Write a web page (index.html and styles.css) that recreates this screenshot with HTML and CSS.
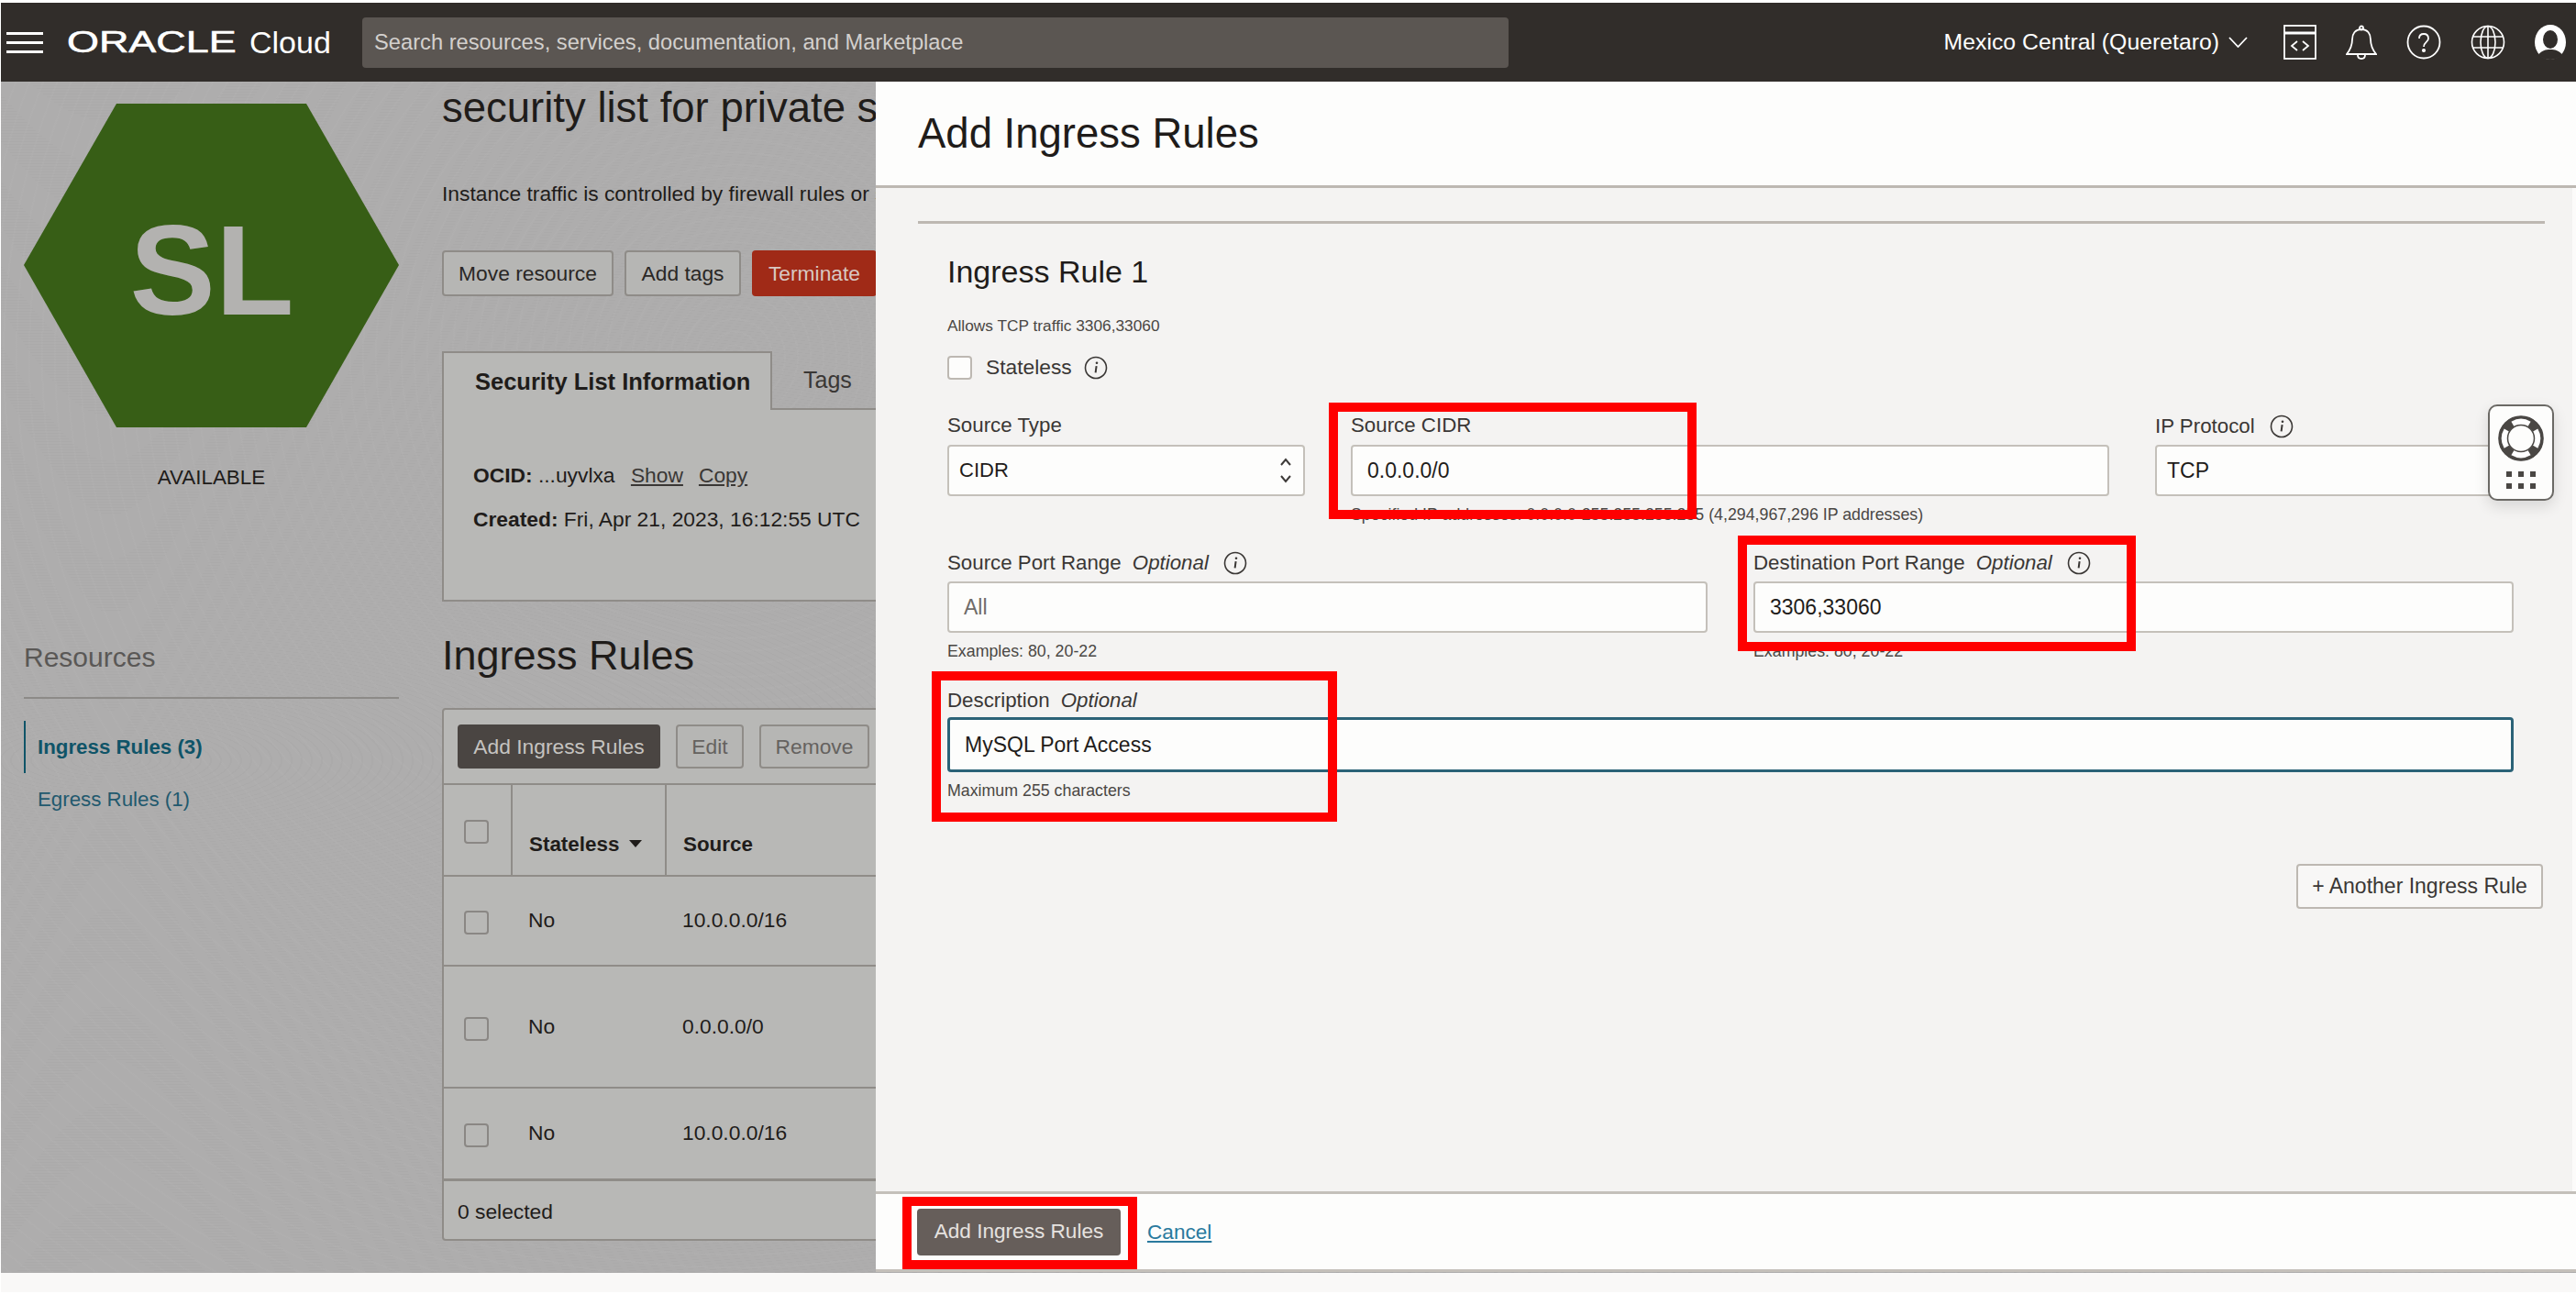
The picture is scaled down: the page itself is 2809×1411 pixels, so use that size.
FILE: index.html
```html
<!DOCTYPE html>
<html lang="en">
<head>
<meta charset="utf-8"/>
<title>Add Ingress Rules – Oracle Cloud</title>
<link rel="stylesheet" href="styles.css">
</head>
<body>
<svg class="defs" width="0" height="0">
  <symbol id="info" viewBox="0 0 26 26">
    <circle cx="13" cy="13" r="11.5" fill="none" stroke="currentColor" stroke-width="1.6"/>
    <path d="M13.6 11.2 12.6 18.4" fill="none" stroke="currentColor" stroke-width="2"/>
    <circle cx="14" cy="7.8" r="1.3" fill="currentColor"/>
  </symbol>
</svg>

<div class="app">
  <header class="topbar">
    <div class="burger"><span></span><span></span><span></span></div>
    <div class="logo"><span class="logo-word">ORACLE</span><span class="logo-cloud">Cloud</span></div>
    <div class="search">Search resources, services, documentation, and Marketplace</div>
    <div class="region">Mexico Central (Queretaro)
      <svg width="21" height="12" viewBox="0 0 21 12"><path d="M1 1l9.500 10L20 1" fill="none" stroke="#fff" stroke-width="1.800"/></svg>
    </div>
    <div class="top-icons">
      <svg width="36" height="38" viewBox="0 0 36 38" fill="none" stroke="#fff" stroke-width="1.800"><rect x="1" y="1" width="34" height="36"/><path d="M1 9h34" stroke-width="3"/><path d="M15 18l-6 5 6 5M21 18l6 5-6 5"/></svg>
      <svg width="34" height="38" viewBox="0 0 34 38" fill="none" stroke="#fff" stroke-width="1.800"><path d="M17 5c-7 0-10 5-10 11 0 7-2 11-6 16h32c-4-5-6-9-6-16 0-6-3-11-10-11z"/><circle cx="17" cy="3.500" r="2"/><path d="M13 33c0 3 2 4 4 4s4-1 4-4"/></svg>
      <svg width="38" height="38" viewBox="0 0 38 38" fill="none" stroke="#fff" stroke-width="1.800"><circle cx="19" cy="19" r="17.500"/><path d="M14 15c0-3 2-5 5-5s5 2 5 5c0 4-5 4-5 9" /><circle cx="19" cy="28" r="1.200" fill="#fff"/></svg>
      <svg width="38" height="38" viewBox="0 0 38 38" fill="none" stroke="#fff" stroke-width="1.600"><circle cx="19" cy="19" r="17.500"/><ellipse cx="19" cy="19" rx="8" ry="17.500"/><path d="M19 1.500v35M2 13h34M2 25h34"/></svg>
      <svg width="34" height="38" viewBox="0 0 34 38"><ellipse cx="17" cy="19" rx="17" ry="19" fill="#fff"/><ellipse cx="17" cy="16" rx="8" ry="10" fill="#312d2a"/><path d="M4 33c3-5 8-6 13-6s10 1 13 6c-3 3-8 5-13 5s-10-2-13-5z" fill="#312d2a"/></svg>
    </div>
  </header>

  <div class="workspace">
    <aside class="side">
      <svg class="hex" width="409" height="353" viewBox="0 0 409 353">
        <polygon points="0,176 101,0 308,0 409,176 308,353 101,353" fill="#375e16"/>
        <text x="205" y="230" text-anchor="middle" class="hex-text">SL</text>
      </svg>
      <div class="status">AVAILABLE</div>
      <h3 class="side-title">Resources</h3>
      <ul class="side-nav">
        <li class="active">Ingress Rules (3)</li>
        <li>Egress Rules (1)</li>
      </ul>
    </aside>

    <main class="detail">
      <h1 class="clipped">security list for private subnet-vcn-mysql</h1>
      <p class="intro clipped">Instance traffic is controlled by firewall rules or security lists on the instance.</p>
      <div class="actions">
        <button class="btn wide-1">Move resource</button>
        <button class="btn wide-2">Add tags</button>
        <button class="btn danger">Terminate</button>
      </div>
      <div class="tabs">
        <div class="tab active">Security List Information</div>
        <div class="tab">Tags</div>
      </div>
      <div class="tab-body">
        <p><strong>OCID:</strong> ...uyvlxa <a class="link-1">Show</a><a class="link-2">Copy</a></p>
        <p><strong>Created:</strong> Fri, Apr 21, 2023, 16:12:55 UTC</p>
      </div>
      <h2>Ingress Rules</h2>
      <div class="table-box">
        <div class="toolbar">
          <button class="btn dark">Add Ingress Rules</button>
          <button class="btn off wide-3">Edit</button>
          <button class="btn off wide-4">Remove</button>
        </div>
        <table>
          <thead>
            <tr><th class="c1"><span class="cb head-cb"></span></th><th class="c2">Stateless <i class="sort"></i></th><th>Source</th></tr>
          </thead>
          <tbody>
            <tr class="r1"><td class="c1"><span class="cb"></span></td><td class="c2">No</td><td>10.0.0.0/16</td></tr>
            <tr class="r2"><td class="c1"><span class="cb"></span></td><td class="c2">No</td><td>0.0.0.0/0</td></tr>
            <tr class="r3"><td class="c1"><span class="cb"></span></td><td class="c2">No</td><td>10.0.0.0/16</td></tr>
          </tbody>
        </table>
        <div class="table-foot">0 selected</div>
      </div>
    </main>

    <!-- drawer on top of the page -->
    <section class="drawer">
      <div class="drawer-head"><h2>Add Ingress Rules</h2></div>
      <div class="drawer-body">
        <div class="rule-line"></div>
        <div class="form">
          <h3>Ingress Rule 1</h3>
          <p class="allows">Allows TCP traffic 3306,33060</p>
          <div class="stateless"><span class="cb white"></span><span>Stateless</span><svg class="info"><use href="#info"/></svg></div>

          <div class="row row-3">
            <div class="field">
              <label>Source Type</label>
              <div class="input select">CIDR
                <svg width="14" height="30" viewBox="0 0 14 30" fill="none" stroke="#3d3a38" stroke-width="2"><path d="M2 9l5-6 5 6M2 21l5 6 5-6"/></svg>
              </div>
            </div>
            <div class="field">
              <label>Source CIDR</label>
              <div class="input pad-l">0.0.0.0/0</div>
              <div class="hint">Specified IP addresses: 0.0.0.0-255.255.255.255 (4,294,967,296 IP addresses)</div>
            </div>
            <div class="field">
              <label>IP Protocol <svg class="info"><use href="#info"/></svg></label>
              <div class="input">TCP</div>
            </div>
          </div>

          <div class="row row-2">
            <div class="field">
              <label>Source Port Range <em>Optional</em> <svg class="info"><use href="#info"/></svg></label>
              <div class="input pad-l placeholder">All</div>
              <div class="hint">Examples: 80, 20-22</div>
            </div>
            <div class="field">
              <label>Destination Port Range <em>Optional</em> <svg class="info"><use href="#info"/></svg></label>
              <div class="input pad-l">3306,33060</div>
              <div class="hint">Examples: 80, 20-22</div>
            </div>
          </div>

          <div class="field desc">
            <label>Description <em>Optional</em></label>
            <div class="input pad-l focused">MySQL Port Access</div>
            <div class="hint">Maximum 255 characters</div>
          </div>
        </div>
        <div class="more"><button class="btn another">+ Another Ingress Rule</button></div>
      </div>
      <div class="drawer-foot">
        <button class="btn submit">Add Ingress Rules</button>
        <a class="cancel">Cancel</a>
      </div>

      <div class="help-widget">
        <svg width="50" height="50" viewBox="0 0 50 50">
          <circle cx="25" cy="25" r="19.500" fill="none" stroke="#4a4744" stroke-width="9.500"/>
          <g fill="none" stroke="#fff" stroke-width="6.500">
            <path d="M16 9.500a18 18 0 0 1 18 0"/>
            <path d="M16 40.500a18 18 0 0 0 18 0"/>
            <path d="M9.500 16a18 18 0 0 0 0 18"/>
            <path d="M40.500 16a18 18 0 0 1 0 18"/>
          </g>
          <circle cx="25" cy="25" r="24" fill="none" stroke="#4a4744" stroke-width="1.500"/>
          <circle cx="25" cy="25" r="14.500" fill="none" stroke="#4a4744" stroke-width="1.500"/>
        </svg>
        <div class="dots"><i></i><i></i><i></i><i></i><i></i><i></i></div>
      </div>
    </section>
  </div>

  <footer class="page-foot">
    <span>Terms of Use and Privacy &nbsp; Cookie Preferences</span>
    <span>Copyright © 2023, Oracle and/or its affiliates. All rights reserved.</span>
  </footer>

  <!-- red annotation boxes drawn over the screenshot -->
  <div class="mark mark-cidr"></div>
  <div class="mark mark-dest"></div>
  <div class="mark mark-desc"></div>
  <div class="mark mark-add"></div>
</div>
</body>
</html>
```

FILE: styles.css
```css
* {
  box-sizing: border-box;
}
html, body {
  margin: 0;
  height: 100%;
  overflow: hidden;
  background: #fff;
}
body {
  font-family: "Liberation Sans", Arial, sans-serif;
  font-size: 22.3px;
  color: #1f1c1a;
}
.defs {
  position: absolute;
}
.app {
  position: relative;
  height: 1411px;
  padding: 3px 0 0 1px;
}

/* top bar */
.topbar {
  height: 86px;
  background: #312d2a;
  color: #fff;
  display: flex;
  align-items: center;
  padding: 0 11px 0 6px;
}
.burger {
  width: 40px;
  height: 23px;
  margin-right: 26px;
  display: flex;
  flex-direction: column;
  justify-content: space-between;
}
.burger span {
  height: 3px;
  background: #fff;
}
.logo {
  width: 322px;
  display: flex;
  align-items: center;
}
.logo-word {
  display: inline-block;
  width: 199px;
  font-size: 33px;
  transform: scaleX(1.36);
  transform-origin: left center;
  -webkit-text-stroke: 0.6px #fff;
}
.logo-cloud {
  font-size: 34px;
  font-weight: normal;
}
.search {
  width: 1250px;
  height: 55px;
  line-height: 55px;
  background: #5b5652;
  border-radius: 4px;
  padding-left: 13px;
  font-size: 23.7px;
  color: #d3d0cd;
}
.region {
  margin-left: auto;
  font-size: 24.8px;
  display: flex;
  align-items: center;
  gap: 10px;
}
.top-icons {
  display: flex;
  align-items: center;
  gap: 32px;
  margin-left: 39px;
}

/* page behind the drawer */
.workspace {
  position: relative;
  height: 1299px;
  display: flex;
  overflow: hidden;
  padding-left: 25px;
  background-color: #aeadad;
  background-image:
    repeating-radial-gradient(ellipse at 120px 740px, transparent 0 9px, rgba(0,0,0,.018) 9px 11px),
    repeating-radial-gradient(circle at 800px 300px, transparent 0 12px, rgba(255,255,255,.018) 12px 14px);
}
.side {
  width: 409px;
  flex: none;
  padding-top: 24px;
}
.hex {
  display: block;
}
.hex-text {
  font-size: 140px;
  font-weight: bold;
  fill: #b3b2b0;
}
.status {
  margin-top: 43px;
  line-height: 24px;
  text-align: center;
  font-size: 22.4px;
  color: #1f1c1a;
}
.side-title {
  margin: 166px 0 0;
  font-size: 30px;
  font-weight: normal;
  line-height: 36px;
  padding-bottom: 25px;
  border-bottom: 2px solid #8c8a87;
  color: #5a5856;
}
.side-nav {
  list-style: none;
  margin: 24px 0 0;
  padding: 0;
  color: #22596e;
}
.side-nav li {
  height: 57px;
  line-height: 58px;
  padding-left: 13px;
  border-left: 2px solid transparent;
}
.side-nav li.active {
  font-weight: bold;
  color: #0f5468;
  border-left-color: #0f5468;
}
.detail {
  width: 1500px;
  flex: none;
  margin-left: 47px;
  font-size: 22.8px;
}
.clipped {
  width: 473px;
  overflow: hidden;
  white-space: nowrap;
}
.detail h1 {
  margin: 4px 0 0;
  font-size: 45.5px;
  font-weight: normal;
  line-height: 50px;
}
.intro {
  margin: 55px 0 0;
  line-height: 26px;
}
.actions {
  display: flex;
  gap: 12px;
  margin-top: 49px;
}
.btn {
  font: inherit;
  height: 50px;
  padding: 0;
  border-radius: 4px;
  border: 2px solid #8f8c88;
  background: #b6b6b4;
  color: #2a2725;
}
.wide-1 {
  width: 187px;
}
.wide-2 {
  width: 127px;
}
.danger {
  width: 136px;
  background: #a02a17;
  border-color: #a02a17;
  color: #d8c8c2;
}
.tabs {
  display: flex;
  margin-top: 60px;
  height: 64px;
}
.tab {
  flex: 1;
  font-size: 25px;
  padding: 17px 0 0 34px;
  border-bottom: 2px solid #8f8c88;
  color: #3a3735;
}
.tab.active {
  flex: none;
  width: 360px;
  background: #b8b8b6;
  border: 2px solid #8f8c88;
  border-bottom: 0;
  color: #1f1c1a;
  font-size: 25.5px;
  font-weight: bold;
}
.tab-body {
  height: 209px;
  padding: 57px 0 0 32px;
  background: #b8b8b6;
  border: 2px solid #8f8c88;
  border-top: 0;
}
.tab-body p {
  margin: 0 0 20px;
  line-height: 28px;
}
.tab-body a {
  text-decoration: underline;
  color: #3a3735;
}
.link-1 {
  margin-left: 11px;
}
.link-2 {
  margin-left: 17px;
}
.detail h2 {
  margin: 34px 0 0;
  font-size: 45px;
  font-weight: normal;
  line-height: 50px;
}
.table-box {
  margin-top: 32px;
  height: 581px;
  background: #b8b8b6;
  border: 2px solid #8f8c88;
  border-radius: 4px;
}
.toolbar {
  height: 82px;
  padding: 16px 0 0 15px;
  display: flex;
  gap: 17px;
  border-bottom: 2px solid #8f8c88;
}
.btn.dark {
  width: 221px;
  height: 48px;
  background: #4a4542;
  border-color: #4a4542;
  color: #c5c3c0;
}
.btn.off {
  height: 48px;
  color: #65625f;
}
.wide-3 {
  width: 74px;
}
.wide-4 {
  width: 120px;
}
table {
  border-collapse: collapse;
  width: 100%;
}
th {
  height: 99px;
  text-align: left;
  vertical-align: bottom;
  padding: 0 0 20px 18px;
  border-bottom: 2px solid #8f8c88;
  border-left: 2px solid #8f8c88;
  font-weight: bold;
  font-size: 22.4px;
}
th.c1 {
  width: 74px;
  border-left: 0;
  padding: 0 0 34px 22px;
}
th.c2 {
  width: 168px;
}
td {
  padding: 0 0 1px 18px;
  border-bottom: 2px solid #8f8c88;
}
td.c1 {
  padding: 4px 0 0 22px;
}
.r1 {
  height: 98px;
}
.r2 {
  height: 133px;
}
.r3 {
  height: 100px;
}
.r3 td {
  border-bottom-width: 3px;
}
.cb {
  display: block;
  width: 27px;
  height: 26px;
  border: 2px solid #8a8784;
  border-radius: 4px;
}
.cb.white {
  background: #fdfdfc;
  border-color: #bdb8b2;
}
.sort {
  display: inline-block;
  margin-left: 4px;
  vertical-align: 4px;
  border-left: 7px solid transparent;
  border-right: 7px solid transparent;
  border-top: 8px solid #1f1c1a;
}
.table-foot {
  padding: 19px 0 0 15px;
  line-height: 28px;
}

/* drawer */
.drawer {
  position: absolute;
  top: 0;
  right: 0;
  width: 1854px;
  height: 1298px;
  display: flex;
  flex-direction: column;
  background: #f4f3f2;
  border-bottom: 3px solid #c4c0ba;
}
.drawer-head {
  height: 116px;
  flex: none;
  padding: 32px 0 0 46px;
  background: #fdfdfc;
  border-bottom: 3px solid #bdb8b2;
}
.drawer-head h2 {
  margin: 0;
  font-size: 45.5px;
  font-weight: normal;
  line-height: 50px;
}
.drawer-body {
  flex: 1;
  padding: 36px 34px 0 46px;
  border-right: 4px solid #fcfbfa;
}
.rule-line {
  height: 3px;
  margin-right: -4px;
  background: #bdb8b2;
}
.form {
  margin: 32px -4px 0 32px;
  width: 1708px;
}
.form h3 {
  margin: 0;
  font-size: 34px;
  font-weight: normal;
  line-height: 40px;
}
.allows {
  margin: 28px 0 0;
  font-size: 17.3px;
  line-height: 22px;
  color: #4a4744;
}
.stateless {
  display: flex;
  align-items: center;
  gap: 15px;
  height: 25px;
  margin: 22px 0 0;
  color: #3a3735;
  font-size: 22.8px;
}
.info {
  width: 26px;
  height: 26px;
  color: #3a3735;
  vertical-align: -6px;
  margin-left: 10px;
}
.stateless .info {
  margin-left: -2px;
}
.row {
  display: grid;
  column-gap: 50px;
  margin-top: 29px;
}
.row-3 {
  grid-template-columns: 390px 827px 390px;
  margin-top: 39px;
}
.row-2 {
  grid-template-columns: 829px 829px;
}
.field label {
  display: block;
  height: 24px;
  line-height: 24px;
  margin-bottom: 9px;
  white-space: nowrap;
  color: #3a3735;
}
.field em {
  margin-left: 6px;
}
.input {
  height: 56px;
  line-height: 52px;
  padding-left: 11px;
  font-size: 23px;
  background: #fdfdfc;
  border: 2px solid #c4c0ba;
  border-radius: 4px;
  display: flex;
  align-items: center;
  justify-content: space-between;
}
.input.pad-l {
  padding-left: 16px;
}
.select {
  padding-right: 12px;
  font-size: 22px;
}
.placeholder {
  color: #6f6c69;
}
.hint {
  margin-top: 9px;
  font-size: 17.8px;
  line-height: 22px;
  color: #4a4744;
  white-space: nowrap;
}
.desc {
  margin-top: 31px;
}
.focused {
  height: 60px;
  margin-top: -3px;
  border: 3px solid #2b6277;
}
.more {
  margin: 69px -2px 0 0;
  text-align: right;
}
.btn.another {
  width: 269px;
  height: 49px;
  background: #f8f7f6;
  border-color: #bdb8b2;
  color: #3a3735;
  font-size: 23px;
}
.drawer-foot {
  height: 85px;
  flex: none;
  display: flex;
  align-items: center;
  padding-left: 45px;
  background: #fdfdfc;
  border-top: 3px solid #c4c0ba;
  font-size: 22.6px;
}
.btn.submit {
  width: 222px;
  height: 51px;
  background: #665e5a;
  border-color: #665e5a;
  color: #e6e3e0;
}
.cancel {
  margin-left: 29px;
  padding-top: 2px;
  color: #2a7a9e;
  text-decoration: underline;
}
.help-widget {
  position: absolute;
  top: 352px;
  left: 1758px;
  width: 72px;
  height: 105px;
  padding-top: 10px;
  background: #fdfdfc;
  border: 2px solid #6b6965;
  border-radius: 10px;
  box-shadow: 0 6px 16px rgba(0,0,0,.12);
  display: flex;
  flex-direction: column;
  align-items: center;
}
.dots {
  display: grid;
  grid-template-columns: repeat(3, 6px);
  gap: 7px;
  margin-top: 11px;
}
.dots i {
  height: 6px;
  background: #4a4744;
}
.page-foot {
  height: 21px;
  overflow: hidden;
  padding: 18px 32px 0 37px;
  display: flex;
  justify-content: space-between;
  background: #f9f8f7;
  font-size: 20px;
  color: #aaa7a4;
}

/* annotations */
.mark {
  position: absolute;
  border: 10px solid #f00;
}
.mark-cidr {
  left: 1449px;
  top: 439px;
  width: 401px;
  height: 127px;
}
.mark-dest {
  left: 1895px;
  top: 584px;
  width: 434px;
  height: 126px;
}
.mark-desc {
  left: 1016px;
  top: 732px;
  width: 442px;
  height: 164px;
}
.mark-add {
  left: 984px;
  top: 1305px;
  width: 256px;
  height: 79px;
}
```
